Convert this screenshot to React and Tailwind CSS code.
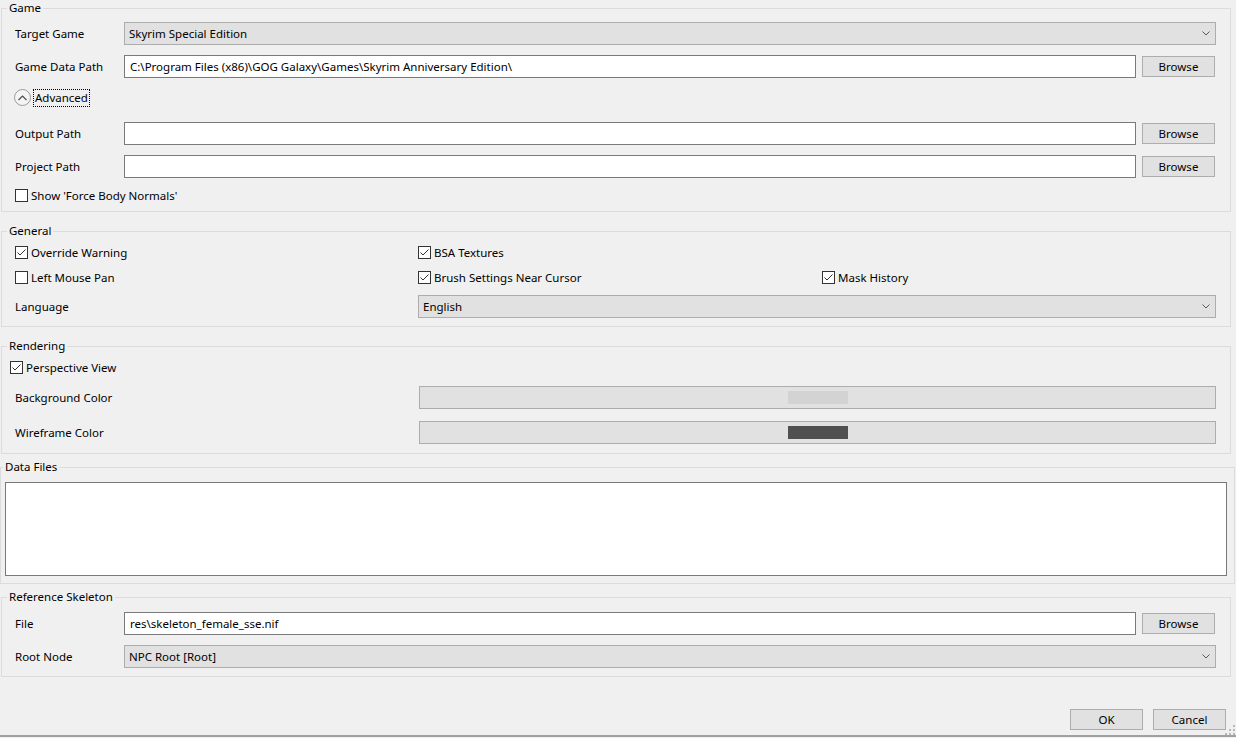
import React from "react";

const Chevron = () => (
  <svg width="8" height="5" viewBox="0 0 8 5" className="shrink-0">
    <path d="M0.5 0.5 L4 4 L7.5 0.5" fill="none" stroke="#5a5a5a" strokeWidth="1" />
  </svg>
);

const Combo = ({ value, className = "" }) => (
  <div className={`flex h-[23px] items-center justify-between border border-[#adadad] bg-[#e1e1e1] pl-[4px] pr-[5px] ${className}`}>
    <span>{value}</span>
    <Chevron />
  </div>
);

const TextBox = ({ value = "" }) => (
  <div className="flex h-[23px] flex-1 items-center border border-[#7a7a7a] bg-white pl-[5px]">
    <span className="whitespace-nowrap">{value}</span>
  </div>
);

const Button = ({ children, className = "" }) => (
  <div className={`flex h-[21px] w-[73px] items-center justify-center border border-[#adadad] bg-[#e1e1e1] ${className}`}>
    {children}
  </div>
);

const CheckBox = ({ label, checked }) => (
  <div className="flex h-[15px] items-center">
    <div className="flex h-[13px] w-[13px] shrink-0 items-center justify-center border border-[#333333] bg-white">
      {checked && (
        <svg width="11" height="11" viewBox="0 0 11 11">
          <path d="M1.5 5.5 L4 8 L9.5 2.5" fill="none" stroke="#333333" strokeWidth="1" />
        </svg>
      )}
    </div>
    <span className="ml-[3px] whitespace-nowrap">{label}</span>
  </div>
);

const PathRow = ({ label, value, className = "" }) => (
  <div className={`flex h-[23px] items-center ${className}`}>
    <span className="w-[109px] shrink-0">{label}</span>
    <TextBox value={value} />
    <Button className="ml-[6px] mr-[1px]">Browse</Button>
  </div>
);

const Group = ({ title, className = "", legendClass = "ml-[5px]", children }) => (
  <fieldset className={`border border-[#dcdcdc] p-0 ${className}`}>
    <legend className={`px-[2px] leading-[16px] ${legendClass}`}>{title}</legend>
    {children}
  </fieldset>
);

const ColorRow = ({ label, swatch, className = "" }) => (
  <div className={`flex h-[23px] items-center ${className}`}>
    <span className="w-[404px] shrink-0">{label}</span>
    <div className="flex h-[23px] flex-1 items-center justify-center border border-[#adadad] bg-[#e1e1e1]">
      <div className={`h-[13px] w-[60px] ${swatch}`} />
    </div>
  </div>
);

export default function App() {
  return (
    <div
      className="relative flex h-[738px] w-[1236px] flex-col overflow-hidden bg-[#f0f0f0] text-[11.5px] leading-[16px] text-black"
      style={{ fontFamily: '"Noto Sans", "Open Sans", sans-serif' }}
    >
      <Group title="Game" className="ml-[1px] w-[1230px]">
        <div className="pl-[13px] pr-[14px] pb-[8px]">
          <div className="mt-[6px] flex h-[23px] items-center">
            <span className="w-[109px] shrink-0">Target Game</span>
            <Combo value="Skyrim Special Edition" className="flex-1" />
          </div>
          <PathRow
            className="mt-[10px]"
            label="Game Data Path"
            value="C:\Program Files (x86)\GOG Galaxy\Games\Skyrim Anniversary Edition\"
          />
          <div className="mt-[10px] flex h-[19px] items-center -ml-[1px]">
            <div className="flex h-[17px] w-[17px] items-center justify-center rounded-full border border-[#9a9a9a] bg-[#f4f4f4]">
              <svg width="9" height="6" viewBox="0 0 9 6">
                <path d="M0.5 5 L4.5 1 L8.5 5" fill="none" stroke="#4a4a4a" strokeWidth="1.1" />
              </svg>
            </div>
            <span className="ml-[2px] border border-dotted border-black px-[1px] leading-[16px]">Advanced</span>
          </div>
          <PathRow className="mt-[15px]" label="Output Path" />
          <PathRow className="mt-[10px]" label="Project Path" />
          <div className="mt-[10px]">
            <CheckBox label="Show 'Force Body Normals'" />
          </div>
        </div>
      </Group>

      <Group title="General" className="ml-[1px] mt-[11px] w-[1230px]">
        <div className="pl-[13px] pr-[14px] pb-[8px]">
          <div className="mt-[6px] grid grid-cols-[403px_404px_1fr]">
            <CheckBox label="Override Warning" checked />
            <CheckBox label="BSA Textures" checked />
            <div />
          </div>
          <div className="mt-[10px] grid grid-cols-[403px_404px_1fr]">
            <CheckBox label="Left Mouse Pan" />
            <CheckBox label="Brush Settings Near Cursor" checked />
            <CheckBox label="Mask History" checked />
          </div>
          <div className="mt-[10px] flex h-[23px] items-center">
            <span className="w-[403px] shrink-0">Language</span>
            <Combo value="English" className="flex-1" />
          </div>
        </div>
      </Group>

      <Group title="Rendering" className="ml-[1px] mt-[11px] w-[1230px]">
        <div className="pl-[13px] pr-[14px] pb-[9px]">
          <div className="mt-[6px] -ml-[5px]">
            <CheckBox label="Perspective View" checked />
          </div>
          <ColorRow className="mt-[11px]" label="Background Color" swatch="bg-[#d3d3d3]" />
          <ColorRow className="mt-[12px]" label="Wireframe Color" swatch="bg-[#505050]" />
        </div>
      </Group>

      <Group title="Data Files" className="mt-[5px] w-[1235px]" legendClass="ml-[2px]">
        <div className="pl-[4px] pb-[7px]">
          <div className="mt-[7px] h-[94px] w-[1222px] border border-[#7a7a7a] bg-white" />
        </div>
      </Group>

      <Group title="Reference Skeleton" className="ml-[1px] mt-[5px] w-[1230px]">
        <div className="pl-[13px] pr-[14px] pb-[8px]">
          <PathRow className="mt-[7px]" label="File" value="res\skeleton_female_sse.nif" />
          <div className="mt-[10px] flex h-[23px] items-center">
            <span className="w-[109px] shrink-0">Root Node</span>
            <Combo value="NPC Root [Root]" className="flex-1" />
          </div>
        </div>
      </Group>

      <div className="mt-[32px] flex justify-end gap-[10px] pr-[10px]">
        <Button>OK</Button>
        <Button>Cancel</Button>
      </div>
      <div className="mt-[5px] h-[2px] w-full bg-[#a0a0a0]" />

      <svg className="absolute bottom-[3px] right-[1px]" width="10" height="10" viewBox="0 0 10 10">
        {[[8, 0], [4, 4], [8, 4], [0, 8], [4, 8], [8, 8]].map(([x, y], i) => (
          <rect key={i} x={x} y={y} width="2" height="2" fill="#b8b8b8" />
        ))}
      </svg>
    </div>
  );
}
